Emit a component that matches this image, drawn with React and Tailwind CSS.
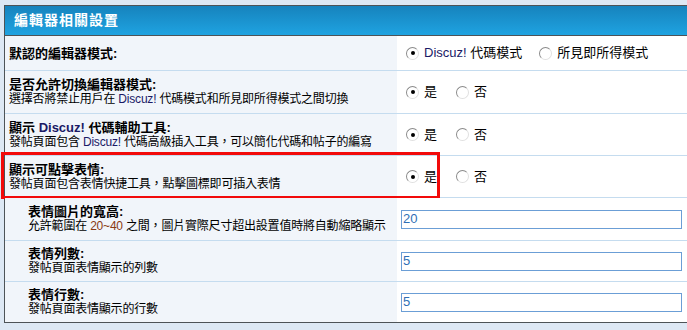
import React from "react";

const font = { fontFamily: '"Liberation Sans", Tahoma, "Noto Sans CJK TC", sans-serif' };

const Radio = ({ checked, label }) => (
  <label className="flex items-center gap-[5px] text-[13px] text-black">
    <span className="flex h-[13px] w-[13px] items-center justify-center rounded-full border border-t-[#8a8a8a] border-l-[#8a8a8a] border-r-[#e0e0e0] border-b-[#e0e0e0] bg-white">
      {checked && <span className="h-[4px] w-[4px] rounded-full bg-black" />}
    </span>
    <span>{label}</span>
  </label>
);

const Row = ({ h, indent, children, right, last, mark }) => (
  <div className={`relative flex ${h} ${last ? "" : "border-b border-[#c5dcef]"}`}>
    <div className={`flex w-[392px] flex-col justify-center bg-[#f1f5fa] ${indent ? "pl-[23px]" : "pl-[4px]"}`}>
      {children}
    </div>
    <div className="flex flex-1 items-center bg-white">{right}</div>
    {mark && (
      <div className="absolute left-[-4px] top-[-4px] h-[47px] w-[439px] border-[3px] border-[#f20a0a]" />
    )}
  </div>
);

const Title = ({ children }) => (
  <div className="text-[13px] font-bold leading-[15px] text-black">{children}</div>
);
const Desc = ({ children }) => (
  <div className="text-[12px] leading-[15px] tracking-[-0.2px] text-black">{children}</div>
);
const Dz = () => <span className="text-[#1a1a66]">Discuz!</span>;

const Input = ({ value }) => (
  <div className="ml-[4px] flex h-[19px] w-[281px] items-center border border-[#6b9ed6] bg-white pl-[1px] text-[13px] text-[#2f6fb6]">
    {value}
  </div>
);

const YesNo = () => (
  <div className="flex gap-[19px] pl-[9px]">
    <Radio checked label="是" />
    <Radio label="否" />
  </div>
);

export default function App() {
  return (
    <div style={font} className="h-[330px] w-[687px] overflow-hidden bg-[#dde8f4] pl-[4px] pt-[5px]">
      <div className="w-[720px] border border-[#4d5357]">
        <div className="flex h-[30px] items-center border-b border-[#4d5357] bg-gradient-to-b from-[#1683bd] to-[#1fa3e1] pl-[9px] text-[14px] font-bold tracking-[1px] text-white">
          編輯器相關設置
        </div>
        <Row
          h="h-[35px]"
          right={
            <div className="flex gap-[17px] pl-[9px]">
              <Radio checked label={<span><span className="text-[#1a1a66]">Discuz!</span> 代碼模式</span>} />
              <Radio label="所見即所得模式" />
            </div>
          }
        >
          <Title>默認的編輯器模式:</Title>
        </Row>
        <Row h="h-[43px]" right={<YesNo />}>
          <Title>是否允許切換編輯器模式:</Title>
          <Desc>
            選擇否將禁止用戶在 <Dz /> 代碼模式和所見即所得模式之間切換
          </Desc>
        </Row>
        <Row h="h-[42px]" right={<YesNo />}>
          <Title>
            顯示 <Dz /> 代碼輔助工具:
          </Title>
          <Desc>
            發帖頁面包含 <Dz /> 代碼高級插入工具，可以簡化代碼和帖子的編寫
          </Desc>
        </Row>
        <Row h="h-[42px]" right={<YesNo />} mark>
          <Title>顯示可點擊表情:</Title>
          <Desc>發帖頁面包含表情快捷工具，點擊圖標即可插入表情</Desc>
        </Row>
        <Row h="h-[43px]" indent right={<Input value="20" />}>
          <Title>表情圖片的寬高:</Title>
          <Desc>
            允許範圍在 <span className="text-[#8a3a12]">20~40</span> 之間，圖片實際尺寸超出設置值時將自動縮略顯示
          </Desc>
        </Row>
        <Row h="h-[41px]" indent right={<Input value="5" />}>
          <Title>表情列數:</Title>
          <Desc>發帖頁面表情顯示的列數</Desc>
        </Row>
        <Row h="h-[40px]" indent last right={<Input value="5" />}>
          <Title>表情行數:</Title>
          <Desc>發帖頁面表情顯示的行數</Desc>
        </Row>
      </div>
    </div>
  );
}
